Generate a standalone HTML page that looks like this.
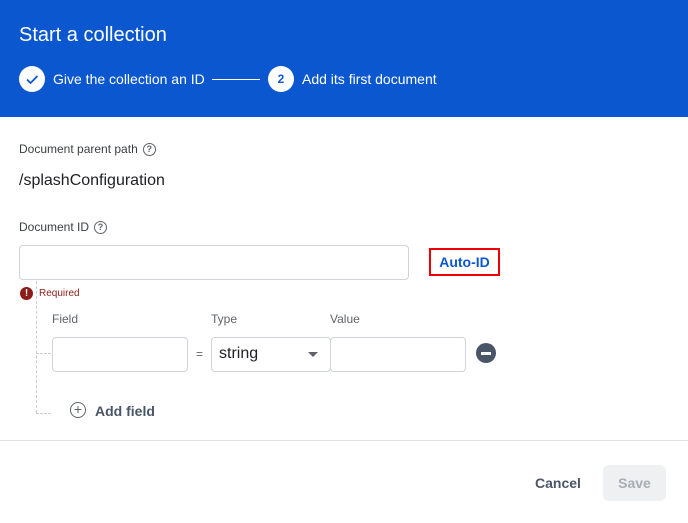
<!DOCTYPE html>
<html><head><style>
*{box-sizing:border-box;margin:0;padding:0}
body{width:688px;height:523px;background:#fff;font-family:"Liberation Sans",sans-serif;position:relative;overflow:hidden;color:#202124}
.hdr{position:absolute;left:0;top:0;width:688px;height:117px;background:#0b57d0}
.a{position:absolute;white-space:nowrap}
.box{position:absolute;border:1px solid #d0d4d8;border-radius:4px;background:#fff}
.q{display:inline-block;width:13px;height:13px;border:1.5px solid #5f6368;border-radius:50%;font-size:9px;text-align:center;line-height:10px;font-weight:bold;color:#5f6368;vertical-align:middle;margin-left:5px}
.lbl{font-size:12px;color:#3c4043}
.dv{position:absolute;border-left:1.5px dashed #c8ccd0}
.dh{position:absolute;border-top:1.5px dashed #c8ccd0}
</style></head><body>
<div class="hdr"></div>
<div class="a" style="left:19px;top:24px;font-size:20px;color:#fff">Start a collection</div>
<div class="a" style="left:19px;top:66px;width:26px;height:26px;border-radius:50%;background:#fff"><svg width="26" height="26"><path d="M8 13.5l3.5 3.5 7-7" stroke="#0b57d0" stroke-width="1.8" fill="none"/></svg></div>
<div class="a" style="left:53px;top:71px;font-size:14px;color:#fff">Give the collection an ID</div>
<div class="a" style="left:212px;top:79px;width:48px;height:1px;background:#fff"></div>
<div class="a" style="left:268px;top:66px;width:26px;height:26px;border-radius:50%;background:#fff;color:#0b57d0;font-size:12px;text-align:center;line-height:26px;font-weight:bold">2</div>
<div class="a" style="left:302px;top:71px;font-size:14px;color:#fff">Add its first document</div>

<div class="a lbl" style="left:19px;top:142px">Document parent path<span class="q">?</span></div>
<div class="a" style="left:19px;top:172px;font-size:16px">/splashConfiguration</div>
<div class="a lbl" style="left:19px;top:220px">Document ID<span class="q">?</span></div>
<div class="box" style="left:19px;top:245px;width:390px;height:35px"></div>
<div class="a" style="left:429px;top:248px;width:71px;height:28px;border:2px solid #e00;color:#0b57d0;font-size:14px;font-weight:bold;text-align:center;line-height:24px">Auto-ID</div>
<div class="a" style="left:20px;top:287px;width:13px;height:13px;border-radius:50%;background:#8c1d18;color:#fff;font-size:10px;font-weight:bold;text-align:center;line-height:13px">!</div>
<div class="a" style="left:39px;top:288px;font-size:10px;color:#8c1d18">Required</div>
<div class="dv" style="left:36px;top:281px;height:132px"></div>
<div class="dh" style="left:36px;top:353px;width:15px"></div>
<div class="dh" style="left:36px;top:413px;width:15px"></div>
<div class="a lbl" style="left:52px;top:312px;color:#5f6368">Field</div>
<div class="a lbl" style="left:211px;top:312px;color:#5f6368">Type</div>
<div class="a lbl" style="left:330px;top:312px;color:#5f6368">Value</div>
<div class="box" style="left:52px;top:337px;width:136px;height:35px"></div>
<div class="a" style="left:196px;top:347px;font-size:12px;color:#5f6368">=</div>
<div class="box" style="left:211px;top:337px;width:120px;height:35px"></div>
<div class="a" style="left:219px;top:345px;font-size:16px">string</div>
<div class="a" style="left:308px;top:352px;width:0;height:0;border-left:5px solid transparent;border-right:5px solid transparent;border-top:5px solid #5f6368"></div>
<div class="box" style="left:330px;top:337px;width:136px;height:35px"></div>
<div class="a" style="left:476px;top:343px;width:20px;height:20px;border-radius:50%;background:#4a5568"><div style="position:absolute;left:5px;top:9px;width:10px;height:2.5px;background:#fff"></div></div>
<div class="a" style="left:70px;top:402px;width:16px;height:16px;border:1.5px solid #5f6368;border-radius:50%;text-align:center;line-height:12px;font-size:14px;color:#5f6368">+</div>
<div class="a" style="left:95px;top:403px;font-size:14px;font-weight:bold;color:#4a5568">Add field</div>
<div class="a" style="left:0;top:440px;width:688px;height:1px;background:#e0e3e6"></div>
<div class="a" style="left:535px;top:475px;font-size:14px;font-weight:bold;color:#4a5568">Cancel</div>
<div class="a" style="left:603px;top:465px;width:63px;height:36px;border-radius:6px;background:#eef0f2;color:#a8adb4;font-size:14px;font-weight:bold;text-align:center;line-height:36px">Save</div>
</body></html>
